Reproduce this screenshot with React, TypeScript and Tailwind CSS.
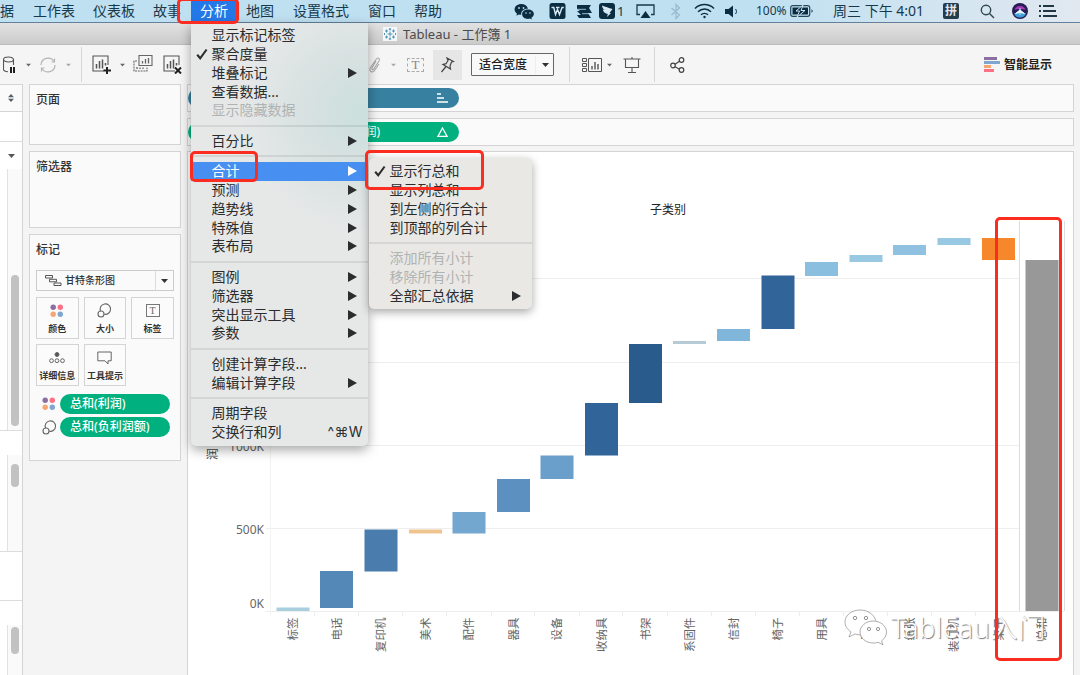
import type { ReactNode } from 'react'

type Item = {
  label: string
  arrow?: boolean
  checked?: boolean
  disabled?: boolean
  active?: boolean
  shortcut?: string
}

const analysisMenu: Item[][] = [
  [
    { label: '显示标记标签' },
    { label: '聚合度量', checked: true },
    { label: '堆叠标记', arrow: true },
    { label: '查看数据...' },
    { label: '显示隐藏数据', disabled: true },
  ],
  [{ label: '百分比', arrow: true }],
  [
    { label: '合计', arrow: true, active: true },
    { label: '预测', arrow: true },
    { label: '趋势线', arrow: true },
    { label: '特殊值', arrow: true },
    { label: '表布局', arrow: true },
  ],
  [
    { label: '图例', arrow: true },
    { label: '筛选器', arrow: true },
    { label: '突出显示工具', arrow: true },
    { label: '参数', arrow: true },
  ],
  [{ label: '创建计算字段...' }, { label: '编辑计算字段', arrow: true }],
  [{ label: '周期字段' }, { label: '交换行和列', shortcut: '^⌘W' }],
]

const totalsMenu: Item[][] = [
  [
    { label: '显示行总和', checked: true },
    { label: '显示列总和' },
    { label: '到左侧的行合计' },
    { label: '到顶部的列合计' },
  ],
  [
    { label: '添加所有小计', disabled: true },
    { label: '移除所有小计', disabled: true },
    { label: '全部汇总依据', arrow: true },
  ],
]

// x, top, bottom, colour
const bars: [string, number, number, number, string][] = [
  ['标签', 276.5, 607.5, 611, '#a9cfdf'],
  ['电话', 320, 571, 608, '#5488b7'],
  ['复印机', 364.5, 529.5, 571.5, '#4a7dad'],
  ['美术', 409, 529.5, 533.5, '#f0c48f'],
  ['配件', 452.5, 512, 533.5, '#73a7d0'],
  ['器具', 497, 479, 512, '#5b90c0'],
  ['设备', 540.5, 455.5, 479, '#6a9fcb'],
  ['收纳具', 585, 403, 455.5, '#31659a'],
  ['书架', 629, 344, 403, '#2a5b8d'],
  ['系固件', 673, 341, 344, '#b7cbd6'],
  ['信封', 717, 329, 341, '#80b6da'],
  ['椅子', 761.5, 275.5, 329, '#31659a'],
  ['用具', 805, 262, 276, '#8abfdf'],
  ['用品', 849.5, 255, 262, '#98c8e2'],
  ['纸张', 893, 245, 255, '#90c1e0'],
  ['装订机', 937.5, 238, 245, '#98c8e2'],
  ['桌子', 982, 238, 260, '#f6882b'],
  ['总和', 1025.5, 260, 611, '#989898'],
]

function Menu({ groups, className }: { groups: Item[][]; className: string }) {
  return (
    <div className={`absolute text-[14px] text-[#2a2c2d] ${className}`}>
      {groups.map((group, g) => (
        <div key={g}>
          {g > 0 && <div className="mt-[5px] mb-[4.800px] h-[2px] bg-black/8" />}
          {group.map((item) => (
            <div
              key={item.label}
              className={`relative flex h-[18.750px] items-center pl-[20.500px] leading-[18px] whitespace-nowrap ${
                item.active ? 'bg-[#4790f2] text-white' : item.disabled ? 'text-[#b0b3b3]' : ''
              }`}
            >
              {item.checked && (
                <svg className="absolute left-[5px] top-[3px]" width="12" height="12" viewBox="0 0 12 12">
                  <path d="M1.2 6.8 4.2 10.3 10.6 1.5" fill="none" stroke="currentColor" strokeWidth="2.1" />
                </svg>
              )}
              <span>{item.label}</span>
              {item.arrow && (
                <svg className="ml-auto mr-[11.500px]" width="9" height="10" viewBox="0 0 9 10">
                  <path d="M0 0 9 5 0 10Z" fill="currentColor" />
                </svg>
              )}
              {item.shortcut && (
                <span className="ml-auto mr-[5px] font-['Inter','DejaVu_Sans',sans-serif] text-[14px] tracking-[0.400px]">{item.shortcut}</span>
              )}
            </div>
          ))}
        </div>
      ))}
    </div>
  )
}

function Caret({ className = '' }: { className?: string }) {
  return (
    <svg className={`shrink-0 ${className}`} width="7" height="4" viewBox="0 0 7 4">
      <path d="M0 0h7L3.5 4Z" fill="currentColor" />
    </svg>
  )
}

function ColorDots() {
  return (
    <svg width="14" height="14" viewBox="0 0 14 14">
      <circle cx="3.2" cy="3.2" r="2.7" fill="#8a6fa0" />
      <circle cx="10.3" cy="3.2" r="2.7" fill="#fb7185" />
      <circle cx="3.2" cy="10.3" r="2.7" fill="#f5a673" />
      <circle cx="10.3" cy="10.3" r="2.7" fill="#7fa6cf" />
    </svg>
  )
}

function SizeIcon() {
  return (
    <svg width="15" height="15" viewBox="0 0 15 15" fill="none" stroke="#666" strokeWidth="1.1">
      <path d="M3.5 8A5.2 5.2 0 1 1 7.2 11.2" />
      <circle cx="4" cy="11" r="3" />
    </svg>
  )
}

function MarkButton({ label, children }: { label: string; children: ReactNode }) {
  return (
    <div className="flex h-[42px] w-[42.5px] flex-col items-center border border-[#d4d4d4] bg-[#fbfbfb] pt-[5.500px]">
      <div className="flex h-[15px] items-center">{children}</div>
      <span className="mt-[4px] text-[9px] leading-[14px] font-bold whitespace-nowrap text-[#333]">{label}</span>
    </div>
  )
}

function MenuBar() {
  return (
    <header className="flex h-[23px] items-center border-b border-[#62809a] bg-linear-to-r from-[#bfe0f1] from-70% to-[#e1e8f0] text-[14px] text-[#17394b]">
      <span className="w-[33px]">据</span>
      <span className="w-[60px]">工作表</span>
      <span className="w-[60px]">仪表板</span>
      <span className="w-[38px]">故事</span>
      <span className="flex h-[22px] w-[46px] items-center justify-center bg-[#2478e8] text-white">分析</span>
      <span className="ml-[9px] w-[47px]">地图</span>
      <span className="w-[75px]">设置格式</span>
      <span className="w-[46px]">窗口</span>
      <span className="w-[40px]">帮助</span>
      <div className="ml-[60px] flex flex-1 items-center">
        <svg width="21" height="17" viewBox="0 0 21 17" fill="#0b2d42">
          <path d="M7.3 1C3.5 1 .6 3.400.6 6.400c0 1.700.9 3.100 2.400 4.200l-.6 2.200 2.400-1.300c.8.2 1.600.3 2.400.3-.5-3.700 2.800-6.200 6.800-6C13.300 2.900 10.700 1 7.300 1Z" />
          <path d="M14 6.500c-3.300 0-5.900 2.100-5.900 4.700s2.600 4.700 5.900 4.700c.7 0 1.300-.1 1.900-.3l2 1-.5-1.800c1.500-.9 2.500-2.200 2.500-3.700 0-2.500-2.600-4.600-5.900-4.600Z" />
          <g fill="#bfe0f1"><circle cx="5" cy="5" r=".9" /><circle cx="9.500" cy="5" r=".9" /><circle cx="12" cy="10" r=".8" /><circle cx="16" cy="10" r=".8" /></g>
        </svg>
        <svg className="ml-[14px]" width="17" height="16" viewBox="0 0 17 16">
          <rect x=".5" width="16" height="16" rx="2.500" fill="#0b2d42" />
          <path d="M2.500 4.500h2.300L6.500 11.500l2-5 2 5 2.500-7h1.800M7 4.500h3.500" fill="none" stroke="#d5e9f4" strokeWidth="1.400" />
        </svg>
        <svg className="ml-[10px]" width="17" height="15" viewBox="0 0 17 15" fill="#0b2d42">
          <path d="M1 1h14l-2 3 3 5h-4l3 5H3l-2-3h4L1 7h3L1 5Z" />
          <path d="M1 5.300h9M6 9.700h9" stroke="#bfe0f1" strokeWidth=".8" />
        </svg>
        <svg className="ml-[6px]" width="16" height="16" viewBox="0 0 16 16">
          <rect width="16" height="16" rx="3" fill="#0b2d42" />
          <path d="M3 2.500c3.500 1.500 6.500 2.300 10.500 3.500L10.500 10h1.500l-4 4 .8-3C5.500 10.500 4 8 3.800 6.500l2 .5C4.200 6 3.200 4.500 3 2.500Z" fill="#d5e9f4" />
        </svg>
        <span className="ml-[2px] w-[8px] text-[13px]">1</span>
        <svg className="ml-[11px]" width="19" height="15" viewBox="0 0 19 15">
          <path d="M4 10.500H1V1h17v9.500h-3" fill="none" stroke="#17394b" strokeWidth="1.300" />
          <path d="m9.500 7 5 7h-10Z" fill="#0b2d42" />
        </svg>
        <svg className="ml-[15px]" width="12" height="17" viewBox="0 0 12 17" fill="none" stroke="#96b9cc" strokeWidth="1.200">
          <path d="m1.500 5 8 7-3.500 3.500v-14L9.500 5l-8 7" />
        </svg>
        <svg className="ml-[12px]" width="21" height="16" viewBox="0 0 21 16" fill="none" stroke="#0b2d42" strokeWidth="1.500">
          <path d="M1 5.500c5.500-5.300 13.500-5.300 19 0M4 8.700c3.700-3.700 9.300-3.700 13 0M7 11.800c2-1.900 5-1.900 7 0" />
          <circle cx="10.500" cy="14" r="1.200" fill="#0b2d42" stroke="none" />
        </svg>
        <svg className="ml-[10px]" width="14" height="13" viewBox="0 0 14 13">
          <path d="M0 4h3.500L8 .5v12L3.500 9H0Z" fill="#0b2d42" />
          <path d="M10.500 4c1.300 1.500 1.300 3.500 0 5" fill="none" stroke="#0b2d42" />
        </svg>
        <span className="ml-[17px] w-[31px] text-[12px]">100%</span>
        <svg className="ml-[3px]" width="24" height="12" viewBox="0 0 24 12">
          <rect x=".7" y=".7" width="19" height="10.600" rx="2" fill="none" stroke="#21485a" strokeWidth="1.200" />
          <rect x="2.500" y="2.500" width="15.500" height="7" fill="#0b2d42" />
          <path d="M13 0 6 6h3.500L7 12l8-6.500h-4Z" fill="#0b2d42" stroke="#cbe4f1" strokeWidth="1" />
          <path d="M21.500 4v4l1.500-2Z" fill="#21485a" />
        </svg>
        <span className="ml-[19px] w-[92px] whitespace-nowrap">周三 下午 4:01</span>
        <span className="ml-[18px] flex size-[16px] items-center justify-center rounded-[2px] bg-[#243d4b] text-[12px] leading-none font-bold text-[#e1e8f0]">
          拼
        </span>
        <svg className="ml-[21px]" width="15" height="15" viewBox="0 0 15 15" fill="none" stroke="#304653" strokeWidth="1.400">
          <circle cx="6" cy="6" r="4.700" />
          <path d="m9.500 9.500 4.500 4.500" />
        </svg>
        <svg className="ml-[17px]" width="16" height="16" viewBox="0 0 16 16">
          <circle cx="8" cy="8" r="8" fill="#2a1d55" />
          <path d="M2.500 6.500a6 6 0 0 1 11 0L8 6Z" fill="#a63bb8" />
          <path d="M2 10.500c3-.5 4.500-3 6-4.500 1.500 1.500 3 4 6 4.500-1 2.500-3 4-6 4s-5-1.500-6-4Z" fill="#3f9fd8" />
          <path d="M3.500 10.500 8 7l4.500 3.500L8 9.500ZM8 5v7" fill="#fff" stroke="#e9f7ff" strokeWidth=".8" />
        </svg>
        <svg className="ml-[11px]" width="18" height="12" viewBox="0 0 18 12" stroke="#203743" strokeWidth="1.900">
          <path d="M0 1h2M0 6h2M0 11h2M4 1h11M4 6h13M4 11h14" />
        </svg>
      </div>
    </header>
  )
}

function TitleBar() {
  return (
    <div className="flex h-[22px] items-center border-b border-[#bcbcbc] bg-linear-to-b from-[#e2e2e2] to-[#cbcbcb] pl-[383px] text-[13px] text-[#4b4b4b]">
      <svg width="14" height="14" viewBox="0 0 14 14">
        <rect width="14" height="14" fill="#f5f7f8" />
        <path
          d="M7 4.500v5M4.500 7h5M7 1v2.500M5.800 2.200h2.400M7 10.500V13M5.800 11.800h2.400M3.500 2.500v3M2 4h3M10.500 2.500v3M9 4h3M3.500 8.500v3M2 10h3M10.500 8.500v3M9 10h3M1.500 6v2M12.500 6v2"
          stroke="#4f93b9"
          strokeWidth="1"
        />
      </svg>
      <span className="ml-[6px] pt-[1px] leading-none">Tableau - 工作簿 1</span>
    </div>
  )
}

function SheetIcon({ badge }: { badge: ReactNode }) {
  return (
    <svg className="shrink-0" width="20" height="19" viewBox="0 0 20 19" fill="none" stroke="#555" strokeWidth="1.100">
      <path d="M16 10V1H1v15h11" />
      <path d="M4.500 13.500V9M7.500 13.500V6M10.500 13.500V4.500M13.500 10.500V8" strokeWidth="1.500" />
      {badge}
    </svg>
  )
}

function Toolbar() {
  return (
    <div className="flex h-[39px] shrink-0 items-center bg-[#f5f5f5] text-[#666]">
      <svg className="ml-[3px]" width="13" height="18" viewBox="0 0 13 18" fill="none" stroke="#555" strokeWidth="1.100">
        <ellipse cx="5.500" cy="3.500" rx="5" ry="2.500" />
        <path d="M.5 3.500v10c0 1.200 2 2 4.500 2.200M10.500 3.500V9" />
        <path d="M8 11v6M11 11v6" stroke="#222" strokeWidth="2" />
      </svg>
      <Caret className="ml-[9px] scale-75" />
      <svg className="ml-[7px]" width="18" height="16" viewBox="0 0 18 16" fill="none" stroke="#b5b5b5" strokeWidth="1.200">
        <path d="M2 8a7 7 0 0 1 13-3.500M16 8A7 7 0 0 1 3 11.500" />
        <path d="M15.500 1.500v3.500h-3M2.500 14.500V11h3" />
      </svg>
      <Caret className="ml-[8px] scale-75 text-[#aaa]" />
      <div className="ml-[9px] h-[35px] w-px bg-[#d6d6d6]" />
      <div className="ml-[10px] flex items-center">
        <SheetIcon badge={<path d="M15 12v7M11.500 15.500H19" stroke="#222" strokeWidth="2" />} />
        <Caret className="ml-[7px] scale-75" />
        <svg className="ml-[7px] -mt-[2px]" width="20" height="17" viewBox="0 0 20 17" fill="none" stroke="#666" strokeWidth="1.100">
          <path d="M6 .5h13v10H6Z" />
          <path d="M4 6H1v10h13v-3.500" strokeDasharray="2 .8" />
          <path d="M9.500 8.500V6M12.500 8.500V4M15.500 8.500V3M4 14v-2M7 14v-1.500M10 14v-1.500" strokeWidth="1.300" />
        </svg>
        <div className="ml-[10px]">
          <SheetIcon badge={<path d="m12 12.500 6 6m0-6-6 6" stroke="#222" strokeWidth="2" />} />
        </div>
      </div>
      <svg className="ml-[185px]" width="14" height="16" viewBox="0 0 14 16" fill="none" stroke="#aaa" strokeWidth="1.100">
        <path d="m8 4-4 7c-.7 1.500 1 2.300 1.800 1L11 4c1.500-3-1.500-4-3-1.500l-5.500 8c-2 3.500 2 6 4 3L11 7" />
      </svg>
      <Caret className="ml-[8px] scale-75 text-[#aaa]" />
      <div className="ml-[10px] flex h-[14px] w-[17px] items-center justify-center border border-dashed border-[#aaa] font-['Liberation_Serif',serif] text-[13px] leading-none text-[#888]">
        T
      </div>
      <div className="ml-[9px] flex h-[30px] w-[29px] items-center justify-center bg-[#e6e6e6]">
        <svg width="15" height="16" viewBox="0 0 15 16" fill="none" stroke="#444" strokeWidth="1.200">
          <path d="m7 1 6.500 3.500-2 .5-1.500 4 .5 3-7.500-4.500 3-.8L8 3.500ZM6 9.500l-4.500 5.500" />
        </svg>
      </div>
      <div className="ml-[9px] flex h-[23px] w-[83px] items-center rounded-[1px] border border-[#666] bg-[#f9f9f9] pl-[7px] text-[12px] font-medium text-[#222]">
        <span className="w-[57px] border-r border-[#eee]">适合宽度</span>
        <Caret className="ml-[6px] text-[#333]" />
      </div>
      <div className="ml-[15px] h-[35px] w-px bg-[#d6d6d6]" />
      <svg className="ml-[12px]" width="20" height="14" viewBox="0 0 20 14" fill="none" stroke="#555">
        <path d="M.5.5h4v3h-4ZM.5 5.500h4v3h-4ZM.5 10.500h4v3h-4ZM6.500.5h13v13h-13Z" />
        <path d="M10 11.500V8M13 11.500V4M16 11.500V6" strokeWidth="1.400" />
      </svg>
      <Caret className="ml-[4px] scale-75" />
      <svg className="ml-[10px]" width="18" height="16" viewBox="0 0 18 16" fill="none" stroke="#555" strokeWidth="1.100">
        <path d="M.5 2h17M2.500 2v8.500h13V2M9 0v2M9 10.500V15M5 15.500h8" />
      </svg>
      <div className="ml-[13px] h-[35px] w-px bg-[#d6d6d6]" />
      <svg className="ml-[15px]" width="15" height="16" viewBox="0 0 15 16" fill="none" stroke="#444" strokeWidth="1.200">
        <circle cx="3" cy="8.500" r="2.300" />
        <circle cx="11.500" cy="3" r="2.300" />
        <circle cx="11.500" cy="13" r="2.300" />
        <path d="M5 7.300 9.500 4.300M5 9.700l4.500 2.500" />
      </svg>
      <div className="ml-auto mr-[28px] flex items-center">
        <svg width="16" height="15" viewBox="0 0 16 15">
          <path fill="#8a6fa0" d="M0 0h13v3H0z" />
          <path fill="#7fa6cf" d="M0 4h16v3H0z" />
          <path fill="#f5a673" d="M0 8h7v3H0z" />
          <path fill="#fb7185" d="M0 12h10v3H0z" />
        </svg>
        <span className="ml-[4px] text-[12px] font-bold text-[#222]">智能显示</span>
      </div>
    </div>
  )
}

function DataPane() {
  return (
    <aside className="flex w-[23px] shrink-0 flex-col border-t border-r border-[#d4d4d4] bg-white">
      <div className="flex h-[27px] items-center justify-end border-b border-[#d4d4d4] bg-[#fafafa] pr-[8px] text-[#52616d]">
        <svg width="6" height="8" viewBox="0 0 6 8" fill="currentColor">
          <path d="M0 3.300h6L3 0ZM0 4.700h6L3 8Z" />
        </svg>
      </div>
      <div className="h-[30px] border-b border-[#ddd]" />
      <div className="flex h-[27px] items-center justify-end pr-[7px] text-[#555]">
        <Caret />
      </div>
      <div className="ml-[7px] h-[261px] border-l border-[#e2e2e2] bg-[#fafafa] pt-[106px] pl-[3px]">
        <div className="h-[151px] w-[8px] rounded-full bg-[#c2c2c2]" />
      </div>
      <div className="h-[25px] border-t border-[#ddd]" />
      <div className="ml-[7px] h-[96px] border-l border-[#e2e2e2] bg-[#fafafa] pt-[9px] pl-[3px]">
        <div className="h-[23px] w-[8px] rounded-full bg-[#c2c2c2]" />
      </div>
      <div className="h-[49px] border-t border-[#ddd]" />
      <div className="h-[25px] border-t border-[#ddd]" />
      <div className="ml-[7px] flex-1 border-l border-[#e2e2e2] bg-[#fafafa] pt-[2px] pl-[3px]">
        <div className="h-[27px] w-[8px] rounded-full bg-[#c2c2c2]" />
      </div>
    </aside>
  )
}

function Cards() {
  const card = 'border border-[#d4d4d4] bg-[#fafafa] pl-[6px] pt-[6px]'
  return (
    <section className="ml-[6px] flex w-[152px] shrink-0 flex-col gap-[6px] text-[12px] font-medium text-[#333]">
      <div className={`h-[61px] ${card}`}>页面</div>
      <div className={`h-[77px] ${card}`}>筛选器</div>
      <div className={`h-[227px] ${card}`}>
        <div>标记</div>
        <div className="mt-[11px] flex h-[21px] w-[138px] items-center border border-[#ccc] text-[10px]">
          <svg className="ml-[8px]" width="17" height="11" viewBox="0 0 17 11" fill="none" stroke="#555">
            <path d="M.5.5h7v2.500h-7ZM4.500 4.300h7v2.500h-7ZM9 8h7v2.500H9Z" />
          </svg>
          <span className="ml-[3px] w-[91px] border-r border-[#ddd] leading-[19px]">甘特条形图</span>
          <Caret className="mx-auto" />
        </div>
        <div className="mt-[5.500px] flex w-[138px] flex-wrap gap-[5.200px]">
          <MarkButton label="颜色"><ColorDots /></MarkButton>
          <MarkButton label="大小"><SizeIcon /></MarkButton>
          <MarkButton label="标签">
            <span className="flex h-[13px] w-[14px] items-center justify-center border border-[#777] font-['Liberation_Serif',serif] text-[10px] leading-none text-[#666]">T</span>
          </MarkButton>
          <MarkButton label="详细信息">
            <svg width="16" height="12" viewBox="0 0 16 12" fill="none" stroke="#666">
              <circle cx="8" cy="2.500" r="2" fill="#555" />
              <circle cx="2.500" cy="8.700" r="1.900" /><circle cx="8" cy="8.700" r="1.900" /><circle cx="13.500" cy="8.700" r="1.900" />
            </svg>
          </MarkButton>
          <MarkButton label="工具提示">
            <svg width="15" height="14" viewBox="0 0 15 14" fill="none" stroke="#666">
              <path d="M.8 1h13.400v8.800h-3.200V13L8 9.800H.8Z" />
            </svg>
          </MarkButton>
        </div>
        <div className="mt-[8.500px] flex flex-col gap-[3px] text-white">
          <div className="flex items-center">
            <span className="flex w-[24px] justify-center pl-[2px]"><ColorDots /></span>
            <span className="h-[20px] w-[110px] rounded-full bg-[#00b17f] pl-[10px] leading-[19px]">总和(利润)</span>
          </div>
          <div className="flex items-center">
            <span className="flex w-[24px] justify-center pl-[2px]"><SizeIcon /></span>
            <span className="h-[20px] w-[110px] rounded-full bg-[#00b17f] pl-[10px] leading-[19px]">总和(负利润额)</span>
          </div>
        </div>
      </div>
    </section>
  )
}

function Chart() {
  return (
    <svg className="block" width="885" height="523" viewBox="188 152 885 523">
      <g fill="none" stroke="#eeeeee">
        <path d="M266 278.500h754M266 362.500h754M266 445.500h754M266 528.500h754M266 611.500h798" />
        <path d="M270.500 221v395" stroke="#f3f3f3" />
        <path d="M314.500 612v4M358.500 612v4M402.500 612v4M446.500 612v4M491.500 612v4M534.500 612v4M579.500 612v4M622.500 612v4M667.500 612v4M711.500 612v4M755.500 612v4M799.500 612v4M843.500 612v4M887.500 612v4M931.500 612v4M975.500 612v4" />
        <path d="M1019.500 221v390M1064.500 221v390" stroke="#dcdcdc" />
      </g>
      <text x="668" y="213.500" textAnchor="middle" fontSize="12" fill="#222">子类别</text>
      {bars.map(([name, x, top, bottom, fill]) => (
        <g key={name}>
          <rect x={x} y={top} width="33" height={bottom - top} fill={fill} />
          <text
            transform={`translate(${x + 20.500} 617.500) rotate(-90)`}
            textAnchor="end"
            fontSize="11.500"
            fill="#666"
          >
            {name}
          </text>
        </g>
      ))}
      <g fontSize="12" fill="#666" textAnchor="end">
        <text x="264" y="534">500K</text>
        <text x="264" y="608">0K</text>
        <text x="264" y="451">1000K</text>
      </g>
      <text transform="translate(217 460) rotate(-90)" fontSize="12" fill="#444">润</text>
    </svg>
  )
}

function Watermark() {
  return (
    <div className="absolute left-[844px] top-[606px] flex h-[42px] items-center">
      <svg width="44" height="38" viewBox="0 0 44 38" fill="#fff" stroke="#999" strokeWidth=".8">
        <path d="M16 2C8 2 1 7 1 14c0 4 2 7 6 10l-2 5 6-3c2 .7 4 1 6 1 8 0 15-5 15-12S25 2 16 2Z" />
        <path d="M29 13c-7 0-13 5-13 11s6 11 13 11c2 0 3 0 5-.7l5 2.500-1.500-4c3-2 5-5 5-8.800 0-6-6-11-13.500-11Z" />
        <g fill="#fff" stroke="#777">
          <circle cx="11" cy="10" r="1.700" /><circle cx="22" cy="10" r="1.700" />
          <circle cx="25" cy="21" r="1.600" /><circle cx="34" cy="21" r="1.600" />
        </g>
      </svg>
      <span className="ml-[3px] text-[27px] leading-none font-light tracking-[0.700px] whitespace-nowrap text-white [text-shadow:1px_1px_1px_#777]">
        Tableau入门
      </span>
    </div>
  )
}

export default function App() {
  return (
    <div className="relative flex h-[675px] w-[1080px] flex-col overflow-hidden bg-[#f5f5f5] font-['Noto_Sans','Noto_Sans_CJK_SC',sans-serif] leading-[18px]">
      <MenuBar />
      <TitleBar />
      <Toolbar />
      <main className="flex min-h-0 flex-1 bg-[#f4f4f4]">
        <DataPane />
        <Cards />
        <section className="ml-[6px] flex w-[887px] flex-col">
          <div className="flex h-[28px] shrink-0 items-center border border-[#d4d4d4] bg-[#fafafa]">
            <div className="flex h-[20px] w-[271px] items-center justify-end rounded-full bg-[#37809f] pr-[11px]">
              <svg width="11" height="10" viewBox="0 0 11 10" stroke="#fff" strokeWidth="1.700">
                <path d="M0 1h4M0 5h7M0 9h11" />
              </svg>
            </div>
          </div>
          <div className="mt-[6px] flex h-[28px] shrink-0 items-center border border-[#d4d4d4] bg-[#fafafa]">
            <div className="flex h-[20px] w-[271px] items-center justify-end rounded-full bg-[#00b17f] pr-[11px] text-[12px] text-white">
              <span className="mr-[57px]">总和(利润)</span>
              <svg width="11" height="10" viewBox="0 0 11 10" fill="none" stroke="#fff" strokeWidth="1.300">
                <path d="m5.500 1 4.500 8.300H1Z" />
              </svg>
            </div>
          </div>
          <div className="mt-[5px] min-h-0 flex-1 border border-b-0 border-[#d4d4d4] bg-white">
            <Chart />
          </div>
        </section>
      </main>

      <Watermark />
      <Menu
        groups={analysisMenu}
        className="left-[191px] top-[23px] h-[423px] w-[177px] rounded-b-[5px] bg-[#e6e8e8] bg-[radial-gradient(circle_at_170px_90px,#cbe0de_0,#d6e1e0_50px,transparent_120px)] pt-[3px] shadow-[0_4px_12px_rgba(0,0,0,0.35)]"
      />
      <Menu
        groups={totalsMenu}
        className="left-[369px] top-[158px] h-[151px] w-[163px] rounded-[5px] bg-[#e9e8e5] pt-[4px] shadow-[0_3px_10px_rgba(0,0,0,0.35)]"
      />

      {/* Highlight frames */}
      <div className="absolute left-[177px] top-[-2px] h-[26px] w-[62px] rounded-[5px] border-[3px] border-[#fb2c20]" />
      <div className="absolute left-[190px] top-[151px] h-[31px] w-[68px] rounded-[5px] border-[3px] border-[#fb2c20]" />
      <div className="absolute left-[365px] top-[150px] h-[40px] w-[119px] rounded-[5px] border-[3px] border-[#fb2c20]" />
      <div className="absolute left-[995px] top-[217px] h-[444px] w-[67px] rounded-[5px] border-[3px] border-[#fb2c20]" />
    </div>
  )
}
